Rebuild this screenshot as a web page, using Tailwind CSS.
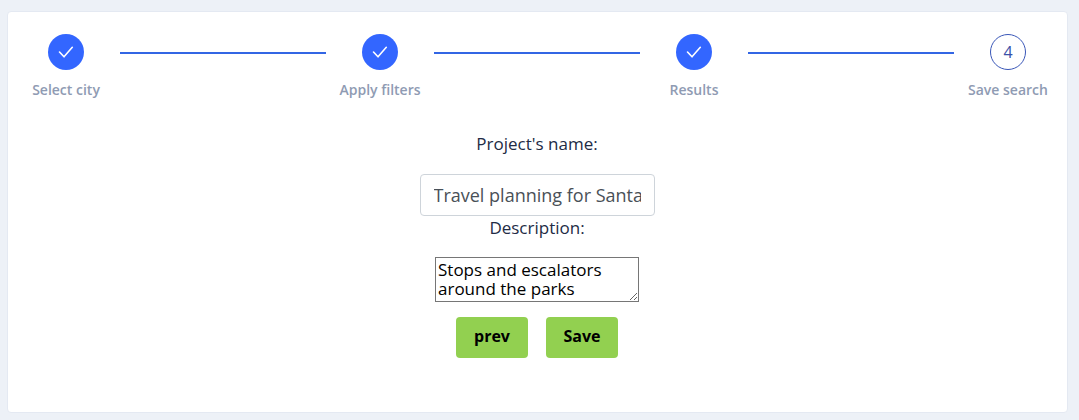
<!DOCTYPE html>
<html lang="en">
<head>
<meta charset="utf-8">
<meta name="viewport" content="width=device-width, initial-scale=1">
<title>Save search</title>
<script src="https://cdn.jsdelivr.net/npm/@tailwindcss/browser@4"></script>
</head>
<body class="min-h-screen flex bg-[#edf1f7] pt-[11px] pb-[7px] pl-[7px] pr-[11px] font-['Open_Sans',sans-serif] text-[#222b45]">
<main class="flex-1 min-w-0 rounded border border-[#e4e9f2] bg-white pl-4 pr-[17px] pt-[22px] pb-8">
  <ol class="flex items-start text-sm leading-6 font-semibold text-[#8f9bb3]">
    <li class="w-[84px] shrink-0 flex flex-col items-center gap-2 whitespace-nowrap">
      <span class="size-9 rounded-full bg-[#3366ff] flex items-center justify-center">
        <svg class="size-5" viewBox="0 0 20 20" fill="none" stroke="#fff" stroke-width="1.6" stroke-linecap="round" stroke-linejoin="round" aria-hidden="true"><path d="M3.500 10 8 14.800 16.300 5.300"/></svg>
      </span>
      <span>Select city</span>
    </li>
    <li class="flex-1 h-[2px] mt-[18px] mx-3 bg-[#3366e4]" aria-hidden="true"></li>
    <li class="w-[84px] shrink-0 flex flex-col items-center gap-2 whitespace-nowrap">
      <span class="size-9 rounded-full bg-[#3366ff] flex items-center justify-center">
        <svg class="size-5" viewBox="0 0 20 20" fill="none" stroke="#fff" stroke-width="1.6" stroke-linecap="round" stroke-linejoin="round" aria-hidden="true"><path d="M3.500 10 8 14.800 16.300 5.300"/></svg>
      </span>
      <span>Apply filters</span>
    </li>
    <li class="flex-1 h-[2px] mt-[18px] mx-3 bg-[#3366e4]" aria-hidden="true"></li>
    <li class="w-[84px] shrink-0 flex flex-col items-center gap-2 whitespace-nowrap">
      <span class="size-9 rounded-full bg-[#3366ff] flex items-center justify-center">
        <svg class="size-5" viewBox="0 0 20 20" fill="none" stroke="#fff" stroke-width="1.6" stroke-linecap="round" stroke-linejoin="round" aria-hidden="true"><path d="M3.500 10 8 14.800 16.300 5.300"/></svg>
      </span>
      <span>Results</span>
    </li>
    <li class="flex-1 h-[2px] mt-[18px] mx-3 bg-[#3366e4]" aria-hidden="true"></li>
    <li class="w-[84px] shrink-0 flex flex-col items-center gap-2 whitespace-nowrap" aria-current="step">
      <span class="size-9 rounded-full border border-[#3a57b8] flex items-center justify-center text-base font-normal text-[#3a50a8]">4</span>
      <span>Save search</span>
    </li>
  </ol>
  <form class="mt-[30px] flex flex-col items-center text-[17px] leading-6">
    <label for="name">Project's name:</label>
    <input id="name" type="text" value="Travel planning for Santa Monica" class="mt-[18px] w-[235px] h-[42px] rounded border border-[#ced4da] bg-white px-[13px] text-lg text-[#495057]">
    <label for="description">Description:</label>
    <textarea id="description" rows="2" class="mt-[17px] w-[204px] h-[45px] resize border border-[#767676] bg-white p-[2px] leading-[19px] text-black overflow-auto">Stops and escalators around the parks</textarea>
    <div class="mt-[15px] flex gap-[18px] text-base">
      <button type="button" class="w-[72px] h-[41px] pb-[3px] rounded bg-[#92d050] font-bold text-black">prev</button>
      <button type="submit" class="w-[72px] h-[41px] pb-[3px] rounded bg-[#92d050] font-bold text-black">Save</button>
    </div>
  </form>
</main>
</body>
</html>
